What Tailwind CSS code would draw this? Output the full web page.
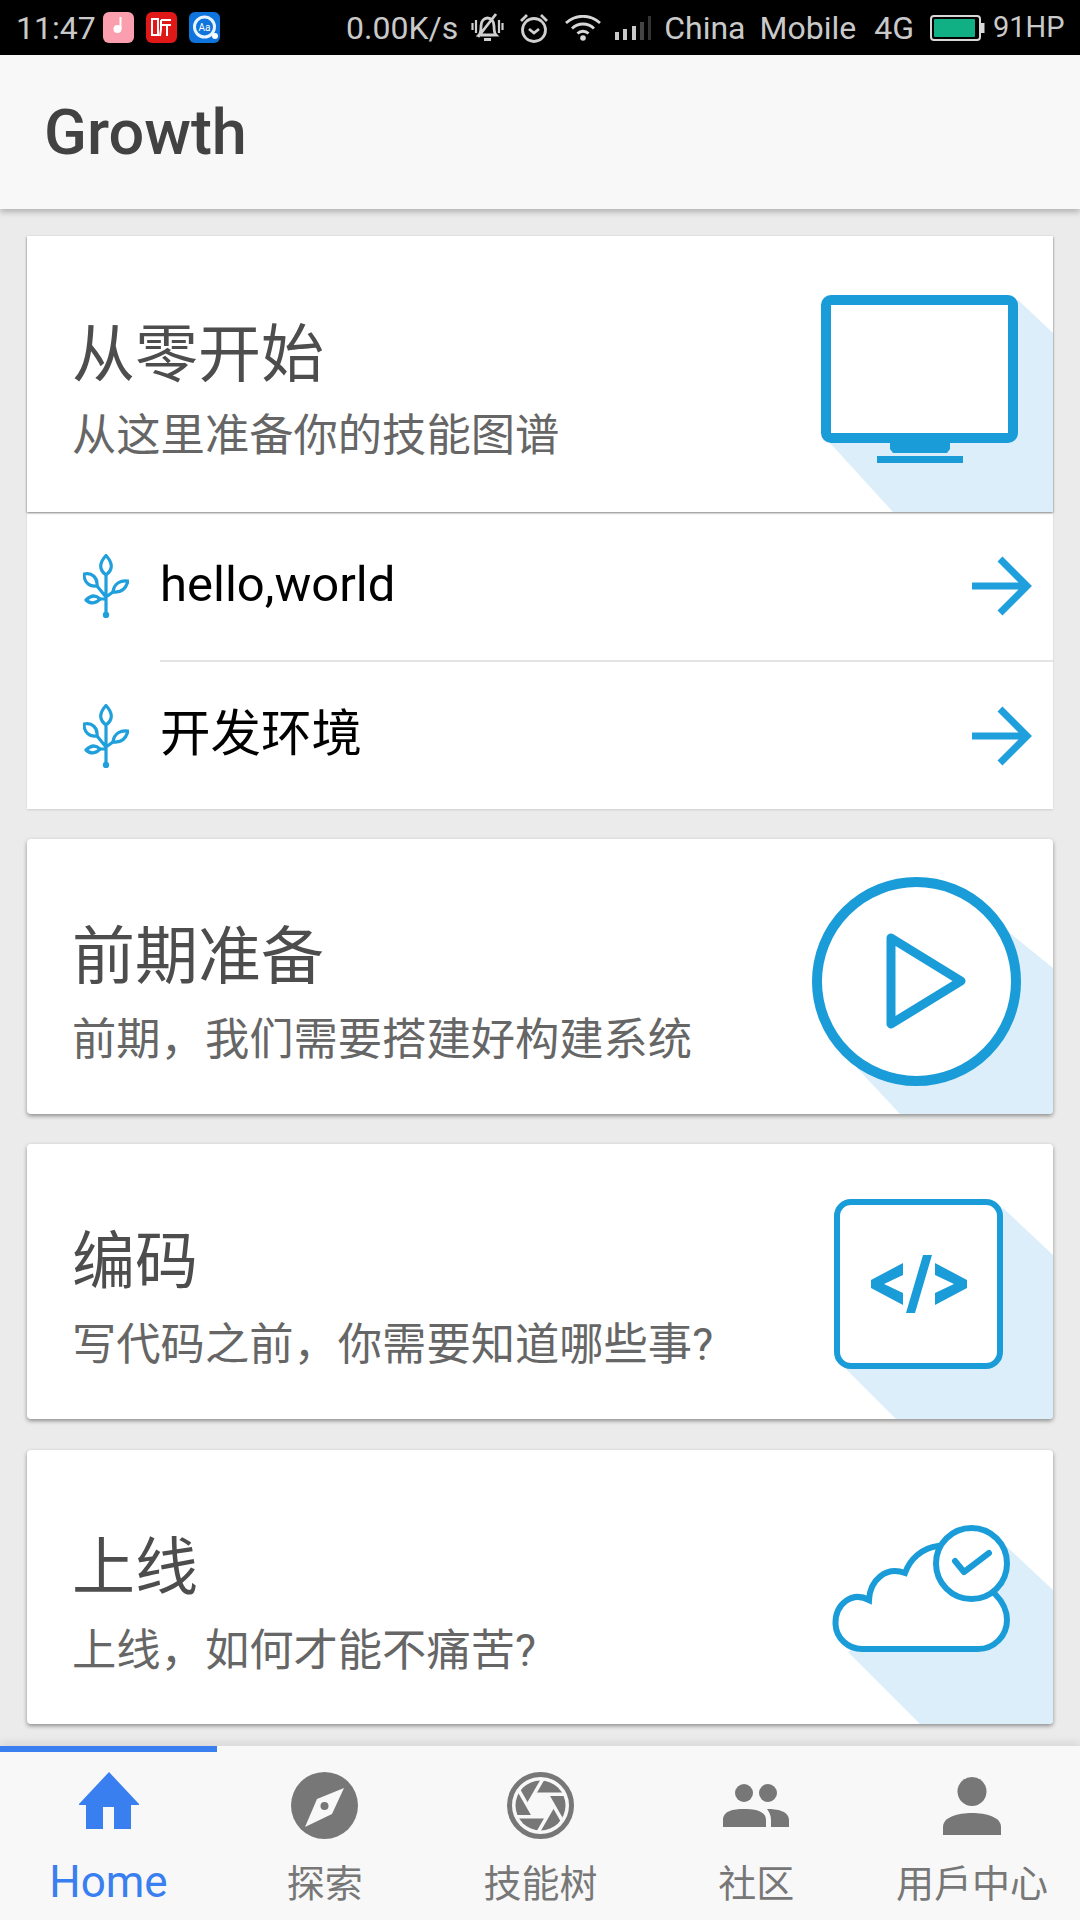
<!DOCTYPE html>
<html lang="en">
<head>
  <meta charset="UTF-8" />
  <meta name="viewport" content="width=device-width, initial-scale=1" />
  <title>Growth</title>
  <script src="https://cdn.jsdelivr.net/npm/@tailwindcss/browser@4"></script>
</head>
<body class="w-[1080px] h-[1920px] overflow-hidden flex flex-col bg-[#ebebeb] font-['Roboto','Noto_Sans_CJK_SC',sans-serif]">

  <!-- status bar -->
  <div class="h-[55px] shrink-0 bg-black text-[#c9c9c9] text-[32px] leading-none flex items-center pl-[16px]">
    <span class="w-[87px]">11:47</span>
    <div class="flex gap-[12px]">
      <svg class="w-[31px] h-[31px]" viewBox="0 0 31 31"><rect width="31" height="31" rx="6" fill="#fb9fae"/><circle cx="14.500" cy="17" r="4" fill="#fff"/><rect x="16.500" y="5" width="2" height="12" fill="#fff"/></svg>
      <svg class="w-[31px] h-[31px]" viewBox="0 0 31 31"><rect width="31" height="31" rx="6" fill="#e01818"/><path d="M6 7h6v16H6zM15 8h10M15 13h10M15 8v9l-1 7M21 13v11" fill="none" stroke="#fff" stroke-width="2"/></svg>
      <svg class="w-[31px] h-[31px]" viewBox="0 0 31 31"><rect width="31" height="31" rx="6" fill="#0f74dc"/><circle cx="15.500" cy="15" r="10" fill="#0f74dc" stroke="#e8f4ff" stroke-width="3"/><text x="15.500" y="18.500" text-anchor="middle" font-size="10" fill="#fff">Aa</text><circle cx="26" cy="24" r="3" fill="#fff"/></svg>
    </div>
    <span class="ml-[126px]">0.00K/s</span>
    <svg class="ml-[13px] w-[33px] h-[29px]" viewBox="0 0 33 29" fill="none" stroke="#d0d0d0" stroke-width="2.800"><path d="M8 22c2-2 2-5 2-9 0-5 3-8 6.500-8s6.500 3 6.500 8c0 4 0 7 2 9zM13 26.500h7M7 24L25 1"/><path d="M1.500 10v7M5 7v13M28 7v13M31.500 10v7" stroke-width="2.200"/></svg>
    <svg class="ml-[15px] w-[30px] h-[30px]" viewBox="0 0 30 30" fill="none" stroke="#d0d0d0" stroke-width="2.800"><circle cx="15" cy="17" r="11.500"/><path d="M2 8l6-6M28 8l-6-6M10 16l5 4 5-4"/></svg>
    <svg class="ml-[16px] w-[36px] h-[26px]" viewBox="0 0 36 26" fill="none" stroke="#d8d8d8" stroke-width="2.800"><path d="M1 8c10-9 24-9 34 0M7 13.500c6-6 16-6 22 0M12.500 18.500c3-3 8-3 11 0"/><circle cx="18" cy="23" r="2.800" fill="#d8d8d8" stroke="none"/></svg>
    <svg class="ml-[13px] w-[38px] h-[24px]" viewBox="0 0 38 24"><rect x="1" y="16" width="4" height="8" fill="#c9c9c9"/><rect x="9" y="13" width="4" height="11" fill="#c9c9c9"/><rect x="18" y="10" width="4" height="14" fill="#c9c9c9"/><rect x="26" y="6" width="4" height="18" fill="#444"/><rect x="34" y="0" width="3" height="24" fill="#333"/></svg>
    <span class="ml-[12px]">China</span>
    <span class="ml-[14px]">Mobile</span>
    <span class="ml-[18px]">4G</span>
    <svg class="ml-[16px] w-[55px] h-[26px]" viewBox="0 0 55 26"><rect x="1" y="1" width="49" height="24" rx="3" fill="none" stroke="#d8d8d8" stroke-width="2"/><rect x="4" y="4" width="41" height="18" rx="1" fill="#10b084"/><rect x="51" y="8" width="3.500" height="10" fill="#d8d8d8"/></svg>
    <span class="ml-[8px] text-[29px]">91HP</span>
  </div>

  <!-- app bar -->
  <header class="h-[154px] shrink-0 bg-[#f8f8f8] flex items-center pl-[44px] shadow-[0_3px_6px_rgba(0,0,0,0.25)] z-10">
    <h1 class="text-[63px] font-medium leading-none text-[#424242]">Growth</h1>
  </header>

  <!-- cards -->
  <main class="flex-1 flex flex-col pt-[27px] px-[27px] gap-[30px] overflow-hidden">

    <section class="bg-white shadow-[0_1px_2px_rgba(0,0,0,0.12)]">
      <div class="h-[276px] flex justify-between shadow-[0_1px_2px_rgba(0,0,0,0.5)]">
        <div class="pl-[45px] pt-[85px]">
          <h2 class="text-[63px] leading-[68px] text-[#4d4d4d]">从零开始</h2>
          <p class="mt-[17px] text-[44.300px] leading-[60px] text-[#666]">从这里准备你的技能图谱</p>
        </div>
        <svg class="w-[280px] h-[276px]" viewBox="773 236 280 276">
          <path d="M1018 300L1053 333V512H893L830 443Z" fill="#dceef9"/>
          <rect x="826" y="300" width="187" height="138" rx="5" fill="#fff" stroke="#1a9cd9" stroke-width="10"/>
          <path d="M890 443H950V449L947 453H893L890 449ZM877 456H963V463H877Z" fill="#1a9cd9"/>
        </svg>
      </div>
      <ul>
        <li class="h-[148px] flex items-center">
          <svg class="ml-[56px] w-[46px] h-[64px]" viewBox="0 0 46 64" fill="none" stroke="#1f9fdb" stroke-width="3.200" stroke-linejoin="round">
            <path d="M23 1.500C17 8 15 15 23 21C31 15 29 8 23 1.500ZM23 21V61M14 32L23 43M30 38L23 43M17 45H23"/>
            <path d="M1 20C9 18 15 24 14 32C6 33 1 28 1 20ZM45 27C38 26 31 29 30 38C38 39 43 35 45 27ZM3 46C8 41 13 41 17 45C13 50 7 50 3 46Z"/>
            <circle cx="23" cy="61" r="3.200" fill="#1f9fdb" stroke="none"/>
          </svg>
          <span class="ml-[31px] pb-[2px] flex-1 text-[49px] text-black">hello,world</span>
          <svg class="mr-[21px] w-[60px] h-[60px]" viewBox="0 0 60 60" fill="none" stroke="#1f9fdb" stroke-width="7"><path d="M0 30H55M28 3L55 30L28 57"/></svg>
        </li>
        <li class="ml-[133px] h-[2px] bg-[#e4e4e4]"></li>
        <li class="h-[147px] flex items-center">
          <svg class="ml-[56px] w-[46px] h-[64px]" viewBox="0 0 46 64" fill="none" stroke="#1f9fdb" stroke-width="3.200" stroke-linejoin="round">
            <path d="M23 1.500C17 8 15 15 23 21C31 15 29 8 23 1.500ZM23 21V61M14 32L23 43M30 38L23 43M17 45H23"/>
            <path d="M1 20C9 18 15 24 14 32C6 33 1 28 1 20ZM45 27C38 26 31 29 30 38C38 39 43 35 45 27ZM3 46C8 41 13 41 17 45C13 50 7 50 3 46Z"/>
            <circle cx="23" cy="61" r="3.200" fill="#1f9fdb" stroke="none"/>
          </svg>
          <span class="ml-[31px] pb-[4px] flex-1 text-[50.500px] text-black">开发环境</span>
          <svg class="mr-[21px] w-[60px] h-[60px]" viewBox="0 0 60 60" fill="none" stroke="#1f9fdb" stroke-width="7"><path d="M0 30H55M28 3L55 30L28 57"/></svg>
        </li>
      </ul>
    </section>

    <section class="h-[275px] shrink-0 bg-white rounded-[4px] overflow-hidden flex justify-between shadow-[0_2px_4px_rgba(0,0,0,0.4)]">
      <div class="pl-[45px] pt-[84px]">
        <h2 class="text-[63px] leading-[68px] text-[#4d4d4d]">前期准备</h2>
        <p class="mt-[19px] text-[44.300px] leading-[60px] text-[#666]">前期，我们需要搭建好构建系统</p>
      </div>
      <svg class="w-[280px] h-[275px]" viewBox="773 839 280 275">
        <path d="M1000 925L1053 968V1114H900L857 1068Z" fill="#dceef9"/>
        <circle cx="916.500" cy="981.500" r="99.500" fill="#fff" stroke="#1a9cd9" stroke-width="10"/>
        <path d="M891 938L961 981L891 1024Z" fill="none" stroke="#1a9cd9" stroke-width="9" stroke-linejoin="round"/>
      </svg>
    </section>

    <section class="h-[275px] shrink-0 bg-white rounded-[4px] overflow-hidden flex justify-between shadow-[0_2px_4px_rgba(0,0,0,0.4)]">
      <div class="pl-[45px] pt-[84px]">
        <h2 class="text-[63px] leading-[68px] text-[#4d4d4d]">编码</h2>
        <p class="mt-[19px] text-[44.300px] leading-[60px] text-[#666]">写代码之前，你需要知道哪些事?</p>
      </div>
      <svg class="w-[280px] h-[275px]" viewBox="773 1144 280 275">
        <path d="M1003 1208L1053 1255V1419H896L845 1368Z" fill="#dceef9"/>
        <rect x="837" y="1202" width="163" height="164" rx="14" fill="#fff" stroke="#1a9cd9" stroke-width="6"/>
        <path d="M903 1263V1275L884 1284L903 1293V1305L871 1288V1280ZM935 1263V1275L954 1284L935 1293V1305L967 1288V1280ZM923 1255H932L915 1313H906Z" fill="#1a9cd9"/>
      </svg>
    </section>

    <section class="mt-[1px] h-[274px] shrink-0 bg-white rounded-[4px] overflow-hidden flex justify-between shadow-[0_2px_4px_rgba(0,0,0,0.4)]">
      <div class="pl-[45px] pt-[84px]">
        <h2 class="text-[63px] leading-[68px] text-[#4d4d4d]">上线</h2>
        <p class="mt-[19px] text-[44.300px] leading-[60px] text-[#666]">上线，如何才能不痛苦?</p>
      </div>
      <svg class="w-[280px] h-[274px]" viewBox="773 1450 280 274">
        <path d="M1005 1545L1053 1590V1724H920L848 1652Z" fill="#dceef9"/>
        <path d="M938 1546C922 1548 910 1559 905 1573C886 1566 870 1580 869 1600C852 1591 835 1604 835.500 1624C836 1638 848 1649 862 1649H978C994 1649 1007 1636 1007 1620C1007 1608 1001 1600 995 1594Z" fill="#fff" stroke="#1a9cd9" stroke-width="6"/>
        <circle cx="971.500" cy="1563.500" r="35.500" fill="#fff" stroke="#1a9cd9" stroke-width="6"/>
        <path d="M955 1561L964 1572L989 1553" fill="none" stroke="#1a9cd9" stroke-width="6" stroke-linecap="round" stroke-linejoin="round"/>
      </svg>
    </section>
  </main>

  <!-- bottom tabs -->
  <nav class="h-[174px] shrink-0 bg-[#f8f8f8] grid grid-cols-[217px_repeat(4,1fr)] shadow-[0_-4px_8px_rgba(0,0,0,0.08)] text-[#777] text-[38px] leading-none">
    <a class="relative flex flex-col items-center text-[#3a7ff0] border-t-[6px] border-[#3a7ff0]">
      <svg class="mt-[20px] w-[62px] h-[58px]" viewBox="0 0 62 58" fill="#3a7ff0"><path d="M31 0L61 32V33H53V57H36V35H25V57H8V33H1V32Z"/></svg>
      <span class="mt-[30px] text-[44px]">Home</span>
    </a>
    <a class="flex flex-col items-center pt-[26px]">
      <svg class="w-[67px] h-[67px]" viewBox="0 0 67 67"><circle cx="33.500" cy="33.500" r="33.500" fill="#777"/><path d="M53 16L41 42L14 55L26 27Z" fill="#f8f8f8"/><circle cx="33.500" cy="34" r="4" fill="#777"/></svg>
      <span class="mt-[26px]">探索</span>
    </a>
    <a class="flex flex-col items-center pt-[26px]">
      <svg class="w-[67px] h-[67px]" viewBox="0 0 67 67">
        <circle cx="33.500" cy="33.500" r="31" fill="#f8f8f8" stroke="#777" stroke-width="5"/>
        <circle cx="33.500" cy="33.500" r="25" fill="#777"/>
        <path d="M46.500 33.500L40 44.760H27L20.500 33.500L27 22.240H40Z" fill="#f8f8f8"/>
        <g stroke="#f8f8f8" stroke-width="3.500">
          <path d="M40 22.240L55.500 49.100"/>
          <path d="M40 22.240L55.500 49.100" transform="rotate(60 33.500 33.500)"/>
          <path d="M40 22.240L55.500 49.100" transform="rotate(120 33.500 33.500)"/>
          <path d="M40 22.240L55.500 49.100" transform="rotate(180 33.500 33.500)"/>
          <path d="M40 22.240L55.500 49.100" transform="rotate(240 33.500 33.500)"/>
          <path d="M40 22.240L55.500 49.100" transform="rotate(300 33.500 33.500)"/>
        </g>
      </svg>
      <span class="mt-[26px]">技能树</span>
    </a>
    <a class="flex flex-col items-center pt-[38px]">
      <svg class="w-[66px] h-[43px]" viewBox="0 0 66 43" fill="#777"><circle cx="21" cy="9" r="9"/><circle cx="45" cy="9" r="9"/><path d="M0 43V36C0 27 10 25 21 25S43 27 43 36V43ZM48 43V36C48 31 46 28 44 25C54 25 66 27 66 36V43Z"/></svg>
      <span class="mt-[38px]">社区</span>
    </a>
    <a class="flex flex-col items-center pt-[31px]">
      <svg class="w-[58px] h-[58px]" viewBox="0 0 58 58" fill="#777"><circle cx="29" cy="14.500" r="14.500"/><path d="M0 58V50C0 40 15 36 29 36S58 40 58 50V58Z"/></svg>
      <span class="mt-[30px]">用戶中心</span>
    </a>
  </nav>
</body>
</html>
